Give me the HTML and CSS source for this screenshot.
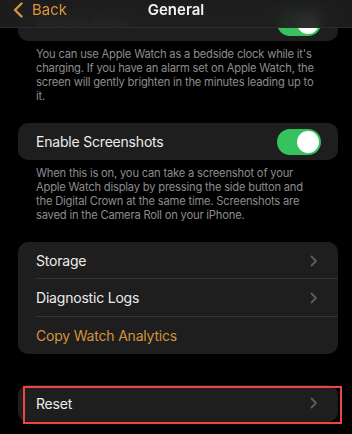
FILE: index.html
```html
<!DOCTYPE html>
<html>
<head>
<meta charset="utf-8">
<link rel="stylesheet" href="styles.css">
</head>
<body>
<div class="navbar">
  <div class="back">
    <svg class="back-chev" width="12" height="16" viewBox="0 0 12 16"><path d="M9.5 1.5 L3 8 L9.5 14.5" fill="none" stroke="#d9953c" stroke-width="2.4" stroke-linecap="round" stroke-linejoin="round"/></svg>
    <span>Back</span>
  </div>
  <div class="title">General</div>
</div>
<main class="content">
  <section class="card first">
    <div class="row">
      <span class="label">Bedside Mode</span>
      <span class="toggle"><span class="knob"></span></span>
    </div>
  </section>
  <p class="footer">You can use Apple Watch as a bedside clock while it's charging. If you have an alarm set on Apple Watch, the screen will gently brighten in the minutes leading up to it.</p>

  <section class="card">
    <div class="row">
      <span class="label">Enable Screenshots</span>
      <span class="toggle"><span class="knob"></span></span>
    </div>
  </section>
  <p class="footer">When this is on, you can take a screenshot of your Apple Watch display by pressing the side button and the Digital Crown at the same time. Screenshots are saved in the Camera Roll on your iPhone.</p>

  <section class="card group">
    <div class="row sep">
      <span class="label">Storage</span>
      <svg class="chev" width="8" height="12" viewBox="0 0 8 12"><path d="M1.5 1.5 L6 6 L1.5 10.5" fill="none" stroke="#5c5c5e" stroke-width="1.8" stroke-linecap="round" stroke-linejoin="round"/></svg>
    </div>
    <div class="row sep">
      <span class="label">Diagnostic Logs</span>
      <svg class="chev" width="8" height="12" viewBox="0 0 8 12"><path d="M1.5 1.5 L6 6 L1.5 10.5" fill="none" stroke="#5c5c5e" stroke-width="1.8" stroke-linecap="round" stroke-linejoin="round"/></svg>
    </div>
    <div class="row">
      <span class="label orange">Copy Watch Analytics</span>
    </div>
  </section>

  <section class="card reset">
    <div class="row">
      <span class="label">Reset</span>
      <svg class="chev" width="8" height="12" viewBox="0 0 8 12"><path d="M1.5 1.5 L6 6 L1.5 10.5" fill="none" stroke="#5c5c5e" stroke-width="1.8" stroke-linecap="round" stroke-linejoin="round"/></svg>
    </div>
    <div class="highlight"></div>
  </section>
</main>
</body>
</html>
```
FILE: styles.css
```css
html, body {
  margin: 0;
  padding: 0;
  background: #000;
  width: 352px;
  height: 434px;
  overflow: hidden;
  font-family: Inter, "Liberation Sans", sans-serif;
  -webkit-font-smoothing: antialiased;
}

.navbar {
  position: fixed;
  top: 0;
  left: 0;
  right: 0;
  height: 27px;
  background: rgba(30, 30, 30, 0.93);
  backdrop-filter: blur(6px);
  border-bottom: 1px solid #2c2c2c;
  z-index: 10;
  display: flex;
  align-items: center;
  justify-content: center;
}

.back {
  position: absolute;
  left: 12px;
  top: 0;
  display: flex;
  align-items: center;
  gap: 8px;
  color: #d9953c;
  font-size: 15px;
  height: 19px;
}

.back-chev {
  display: block;
}

.title {
  color: #f2f2f2;
  font-size: 15px;
  font-weight: 600;
  margin-top: -8px;
}

.content {
  padding: 4px 14px 0 18px;
}

.card {
  background: #1e1e1f;
  border-radius: 10px;
  position: relative;
}

.row {
  height: 37px;
  display: flex;
  align-items: center;
  justify-content: space-between;
  padding: 0 18px;
  position: relative;
}

.group .row {
  height: 37.3px;
}

.row.sep::after {
  content: "";
  position: absolute;
  left: 18px;
  right: 0;
  bottom: 0;
  height: 1px;
  background: #343436;
}

.label {
  color: #ececec;
  font-size: 14px;
  letter-spacing: -0.2px;
}

.label.orange {
  color: #d4933c;
}

.toggle {
  width: 44px;
  height: 26px;
  border-radius: 13px;
  background: #38c25e;
  position: relative;
  margin-right: -1px;
}

.knob {
  position: absolute;
  right: 2px;
  top: 2px;
  width: 22px;
  height: 22px;
  border-radius: 50%;
  background: #fff;
}

.chev {
  display: block;
  margin-right: 2px;
}

.footer {
  margin: 6px 0 0 0;
  padding: 0 18px 0 18px;
  color: #8c8c8e;
  font-size: 11.2px;
  letter-spacing: -0.2px;
  line-height: 14px;
  height: 76px;
}

.reset {
  margin-top: 31px;
}

.highlight {
  position: absolute;
  left: 5px;
  right: -4px;
  top: 1px;
  bottom: -2px;
  border: 2px solid #ef4444;
}
```
